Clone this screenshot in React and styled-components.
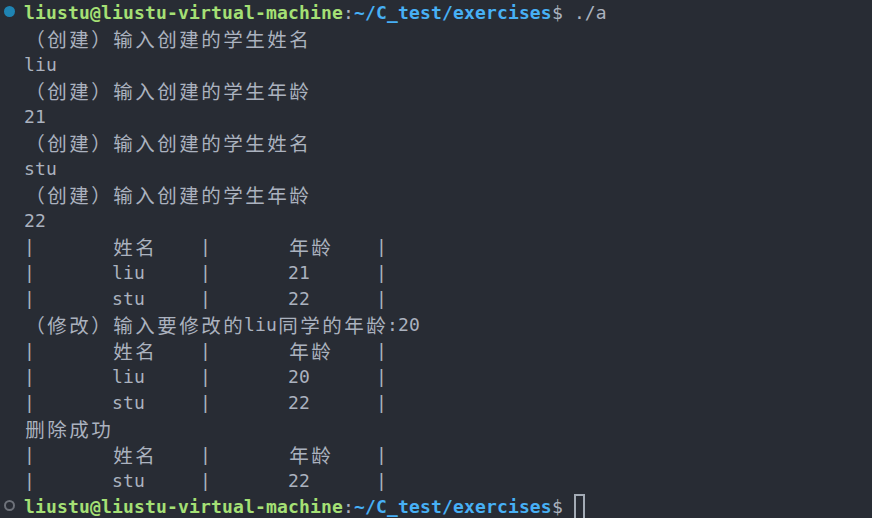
import React from "react";
import styled, { createGlobalStyle } from "styled-components";

const CELL = 11;

const Global = createGlobalStyle`
  html, body { margin: 0; padding: 0; background: #282c34; }
  body { width: 872px; height: 518px; overflow: hidden; }
`;

const Terminal = styled.div`
  width: 872px;
  height: 518px;
  background: #282c34;
  color: #abb2bf;
  font-family: "DejaVu Sans Mono", "Noto Sans CJK SC", monospace;
  font-size: 18px;
  display: flex;
  flex-direction: column;
  overflow: hidden;
`;

const Line = styled.div`
  display: flex;
  height: 26px;
  flex-shrink: 0;
`;

const Gutter = styled.div`
  width: 24px;
  flex-shrink: 0;
  display: flex;
  justify-content: flex-start;
  align-items: flex-start;
`;

const Dot = styled.span`
  margin: 6px 0 0 4px;
  width: 11px;
  height: 11px;
  box-sizing: border-box;
  border-radius: 50%;
  background: ${(p) => (p.$done ? "#1f84b3" : "transparent")};
  border: ${(p) => (p.$done ? "none" : "2px solid #6e727a")};
`;

const Content = styled.div`
  white-space: pre;
  line-height: 26px;
  letter-spacing: 0.16px;
`;

const Wide = styled.span`
  display: inline-block;
  vertical-align: top;
  width: ${CELL * 2}px;
  height: 26px;
  line-height: 26px;
  text-align: center;
  letter-spacing: 0;
  font-size: 19.5px;
  font-family: "Noto Sans CJK SC", "DejaVu Sans Mono", sans-serif;
`;

const User = styled.span`
  color: #a5e075;
  font-weight: bold;
`;

const Path = styled.span`
  color: #47b0f5;
  font-weight: bold;
`;

const Cursor = styled.span`
  display: inline-block;
  vertical-align: top;
  width: ${CELL}px;
  height: 26px;
  box-sizing: border-box;
  border: 2px solid #a3abb5;
`;

const WIDE_RE = /[\u2e80-\u9fff\uff00-\uffef\u3000-\u303f]/;

function Text({ children }) {
  const out = [];
  let buf = "";
  let k = 0;
  for (const ch of children) {
    if (WIDE_RE.test(ch)) {
      if (buf) {
        out.push(<span key={k++}>{buf}</span>);
        buf = "";
      }
      out.push(<Wide key={k++}>{ch}</Wide>);
    } else buf += ch;
  }
  if (buf) out.push(<span key={k++}>{buf}</span>);
  return <>{out}</>;
}

function Prompt({ cmd, cursor }) {
  return (
    <>
      <User>liustu@liustu-virtual-machine</User>
      :<Path>~/C_test/exercises</Path>$ {cmd}
      {cursor && <Cursor />}
    </>
  );
}

const lines = [
  "（创建）输入创建的学生姓名",
  "liu",
  "（创建）输入创建的学生年龄",
  "21",
  "（创建）输入创建的学生姓名",
  "stu",
  "（创建）输入创建的学生年龄",
  "22",
  "|       姓名    |       年龄    |",
  "|       liu     |       21      |",
  "|       stu     |       22      |",
  "（修改）输入要修改的liu同学的年龄:20",
  "|       姓名    |       年龄    |",
  "|       liu     |       20      |",
  "|       stu     |       22      |",
  "删除成功",
  "|       姓名    |       年龄    |",
  "|       stu     |       22      |",
];

export default function App() {
  return (
    <>
      <Global />
      <Terminal>
        <Line>
          <Gutter>
            <Dot $done />
          </Gutter>
          <Content>
            <Prompt cmd="./a" />
          </Content>
        </Line>
        {lines.map((l, i) => (
          <Line key={i}>
            <Gutter />
            <Content>
              <Text>{l}</Text>
            </Content>
          </Line>
        ))}
        <Line>
          <Gutter>
            <Dot />
          </Gutter>
          <Content>
            <Prompt cmd="" cursor />
          </Content>
        </Line>
      </Terminal>
    </>
  );
}
